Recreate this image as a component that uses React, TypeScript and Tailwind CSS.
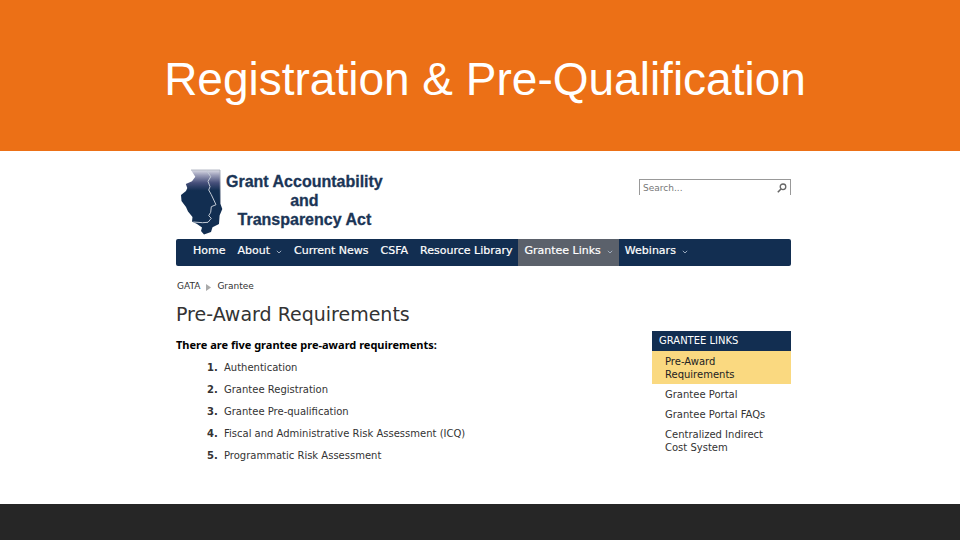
import React from "react";

type NavItem = { label: string; menu?: boolean; active?: boolean };

const navItems: NavItem[] = [
  { label: "Home" },
  { label: "About", menu: true },
  { label: "Current News" },
  { label: "CSFA" },
  { label: "Resource Library" },
  { label: "Grantee Links", menu: true, active: true },
  { label: "Webinars", menu: true },
];

const requirements = [
  "Authentication",
  "Grantee Registration",
  "Grantee Pre-qualification",
  "Fiscal and Administrative Risk Assessment (ICQ)",
  "Programmatic Risk Assessment",
];

const granteeLinks = [
  "Pre-Award Requirements",
  "Grantee Portal",
  "Grantee Portal FAQs",
  "Centralized Indirect Cost System",
];

function StateLogo() {
  return (
    <svg className="h-[68px] w-[44px] shrink-0" viewBox="0 0 44 68" aria-hidden="true">
      <defs>
        <linearGradient id="state" x1="0" y1="0" x2="0" y2="1">
          <stop offset="0" stopColor="#dcdce6" />
          <stop offset="0.08" stopColor="#9a9db8" />
          <stop offset="0.2" stopColor="#464f7a" />
          <stop offset="0.32" stopColor="#122e51" />
        </linearGradient>
      </defs>
      <path
        d="M11 2 L40 2 L40.5 36 L42.3 41 L39.6 47.5 L39 56 L32.5 59.3 L31 64 L24 66.5 L21 63 L22 59.5 L17 56 L12 53.5 L12.5 49 L8 43.5 L6 39 L1.5 33 L1 27 L6 23 L7.3 20 L5.8 16 L12 13.3 L15.3 8.7 Z"
        fill="url(#state)"
      />
      <path d="M11 2 L40 2 L40.5 36" fill="none" stroke="#a3a9b8" strokeWidth="0.8" />
      <path
        d="M26.7 2.5 L30.7 8.7 L28 13.3 L30 18.7 L28.7 22 L31.3 26.7 L36 36.7 L31.3 38.7 L30.7 44.3 L28.7 47.7 L31.3 50.3 L28 54.3 L22.7 54.7 L13.3 54"
        fill="none"
        stroke="#c3cbd6"
        strokeWidth="1"
      />
    </svg>
  );
}

function Chevron() {
  return (
    <svg className="h-[4px] w-[6px]" viewBox="0 0 6 4" aria-hidden="true">
      <path d="M0.8 0.8 L3 3 L5.2 0.8" fill="none" stroke="#a9b8c9" strokeWidth="0.9" />
    </svg>
  );
}

export default function App() {
  return (
    <div className="flex min-h-screen flex-col bg-white font-['DejaVu_Sans',sans-serif] text-[#333]">
      <header className="flex h-[151px] items-center justify-center bg-[#ec7016] pl-2.5">
        <h1 className="pt-1.5 font-['Liberation_Sans',sans-serif] text-[46px] leading-[52px] text-white">
          Registration &amp; Pre-Qualification
        </h1>
      </header>

      <main className="flex-1 pr-[169px] pl-[176px]">
        <div className="flex items-start justify-between pt-[17px]">
          <div className="flex gap-0.5 pl-1">
            <StateLogo />
            <p className="pt-1 text-center font-['Liberation_Sans',sans-serif] text-[16px] leading-[19px] font-bold text-[#1b3556] [-webkit-text-stroke:0.3px_#1b3556]">
              Grant Accountability
              <br />
              and
              <br />
              Transparency Act
            </p>
          </div>
          <form className="mt-[11px] flex h-4 w-[152px] items-center border border-b-0 border-[#999] px-[3px]">
            <input
              type="text"
              aria-label="Search"
              placeholder="Search..."
              className="min-w-0 flex-1 text-[9px] leading-[14px] outline-none placeholder:text-[#777]"
            />
            <button type="submit" aria-label="Submit search">
              <svg className="size-[10px]" viewBox="0 0 10 10" fill="none" stroke="#666" aria-hidden="true">
                <circle cx="6" cy="3.8" r="2.8" strokeWidth="1.3" />
                <path d="M4 6 L0.8 9.2" strokeWidth="1.6" />
              </svg>
            </button>
          </form>
        </div>

        <nav className="mt-[3px] flex h-[27px] rounded-xs bg-[#122e51] pl-[11px]">
          {navItems.map((item) => (
            <a
              key={item.label}
              href="#"
              className={`flex items-center gap-1.5 px-1.5 pb-0.5 text-[11px] whitespace-nowrap text-white [-webkit-text-stroke:0.2px_white] ${
                item.active ? "bg-[#5b616b]" : ""
              }`}
            >
              {item.label}
              {item.menu && <Chevron />}
            </a>
          ))}
        </nav>

        <div className="mt-[13px] flex h-4 items-center gap-1.5 pl-px text-[9px]">
          <a href="#">GATA</a>
          <svg className="h-[7px] w-[5px]" viewBox="0 0 5 7" aria-hidden="true">
            <path d="M0 0 L5 3.5 L0 7 Z" fill="#aaa" />
          </svg>
          <a href="#">Grantee</a>
        </div>

        <div className="flex items-start justify-between">
          <section>
            <h2 className="mt-[7px] text-[19px] leading-6">Pre-Award Requirements</h2>
            <p className="mt-[11px] font-['Noto_Sans',sans-serif] text-[11px] leading-4 font-bold text-black">
              There are five grantee pre-award requirements:
            </p>
            <ol className="mt-[3px] text-[10px]">
              {requirements.map((item, i) => (
                <li key={item} className="flex h-[22px] items-center">
                  <span className="w-[48px] pl-[31px] font-bold">{i + 1}.</span>
                  {item}
                </li>
              ))}
            </ol>
          </section>

          <aside className="mt-[36px] w-[139px]">
            <h3 className="bg-[#122e51] pl-[7px] text-[10px] leading-5 text-white">GRANTEE LINKS</h3>
            <ul className="text-[10px] leading-[13px]">
              {granteeLinks.map((link, i) => (
                <li
                  key={link}
                  className={`pr-6 pl-[13px] ${i === 0 ? "bg-[#fad980] pt-1 pb-[3px] text-[#222]" : "pt-1 pb-[3px]"}`}
                >
                  <a href="#">{link}</a>
                </li>
              ))}
            </ul>
          </aside>
        </div>
      </main>

      <footer className="h-9 bg-[#262626]" />
    </div>
  );
}
